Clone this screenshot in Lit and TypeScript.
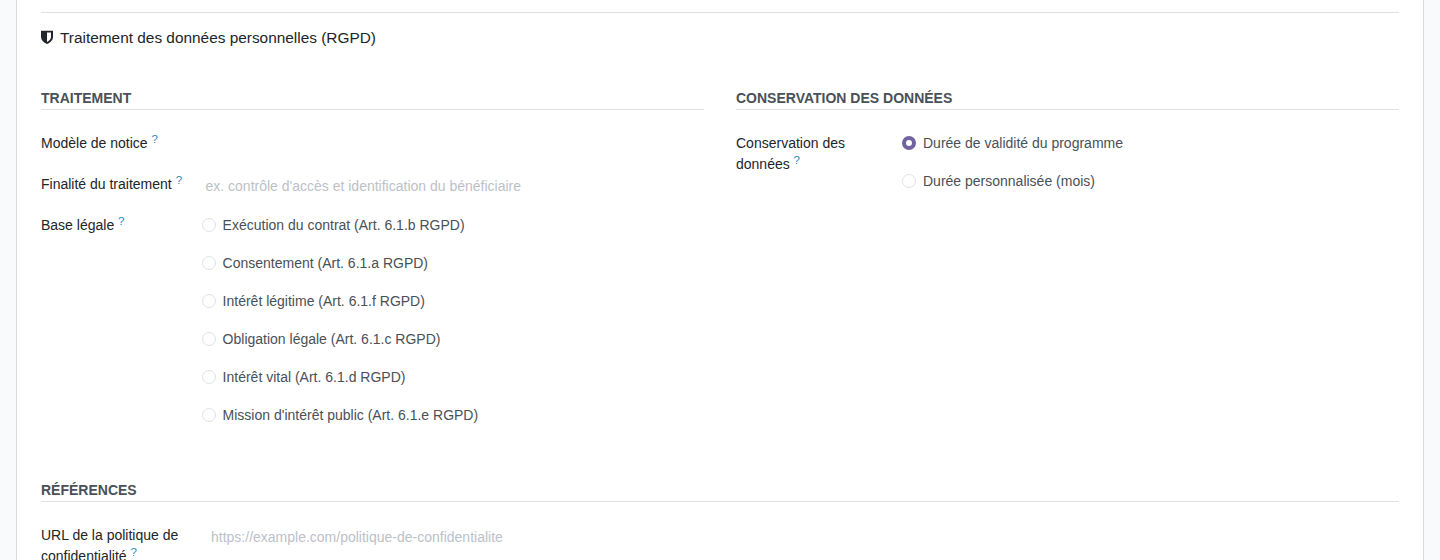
import { LitElement, html, css } from "lit";
import { customElement } from "lit/decorators.js";

const legal = [
  "Exécution du contrat (Art. 6.1.b RGPD)",
  "Consentement (Art. 6.1.a RGPD)",
  "Intérêt légitime (Art. 6.1.f RGPD)",
  "Obligation légale (Art. 6.1.c RGPD)",
  "Intérêt vital (Art. 6.1.d RGPD)",
  "Mission d'intérêt public (Art. 6.1.e RGPD)",
];

@customElement("app-root")
export class AppRoot extends LitElement {
  static styles = css`
    :host {
      display: block;
      height: 560px;
      overflow: hidden;
      background: #f9fafb;
      font-family: "Liberation Sans", Arial, sans-serif;
      font-size: 14px;
      line-height: 21px;
      color: #212529;
    }
    .sheet {
      box-sizing: border-box;
      margin: 0 16px;
      height: 560px;
      background: #fff;
      border-left: 1px solid #d8dadd;
      border-right: 1px solid #d8dadd;
      padding: 12px 24px 0;
    }
    .rule { height: 1px; background: #dee2e6; }
    .title {
      display: flex;
      align-items: center;
      gap: 7px;
      margin-top: 14px;
      height: 21px;
      font-size: 15.4px;
      color: #212529;
    }
    .title svg { display: block; width: 12px; height: 14px; position: relative; top: -1px; }
    .cols {
      display: grid;
      grid-template-columns: 1fr 1fr;
      column-gap: 32px;
      margin-top: 40px;
    }
    .head {
      font-weight: 700;
      font-size: 14px;
      line-height: 21px;
      color: #495057;
      text-transform: uppercase;
      border-bottom: 1px solid #dee2e6;
      height: 21px;
    }
    .form-left { display: grid; grid-template-columns: 161px 1fr; margin-top: 23px; }
    .form-right { display: grid; grid-template-columns: 166px 1fr; margin-top: 23px; }
    .form-right .radio { gap: 7px; }
    .label { color: #212529; padding-right: 8px; }
    .row-gap { margin-bottom: 20px; }
    sup {
      font-size: 11.500px;
      line-height: 0;
      color: #1c8cba;
      vertical-align: baseline;
      position: relative;
      top: -5px;
    }
    .placeholder { color: #bcc1c8; padding-left: 3.500px; position: relative; top: 2px; }
    .radios { display: flex; flex-direction: column; gap: 17px; }
    .radio { display: flex; align-items: center; gap: 6.600px; color: #495057; height: 21px; }
    .dot {
      box-sizing: border-box;
      width: 14px;
      height: 14px;
      border-radius: 50%;
      border: 1px solid #dee2e6;
      background: #fff;
      flex: none;
      position: relative;
      top: -1px;
    }
    .dot.on { border: 4px solid #71639e; }
    .refs { margin-top: 54px; }
    .form-refs { display: grid; grid-template-columns: 170px 1fr; margin-top: 23px; }
    .form-refs .placeholder { padding-left: 0; }
  `;

  render() {
    return html`
      <div class="sheet">
        <div class="rule"></div>
        <div class="title">
          <svg viewBox="0 0 12 14" aria-hidden="true">
            <path fill-rule="evenodd" fill="#212529" d="M0 .8 H12 V7 C12 10 9.500 12.500 6 14 C2.500 12.500 0 10 0 7 Z M6 2.500 V11.900 C8.300 10.800 10 9.200 10 7 V2.500 Z"/>
          </svg>
          <span>Traitement des données personnelles (RGPD)</span>
        </div>
        <div class="cols">
          <div>
            <div class="head">Traitement</div>
            <div class="form-left">
              <div class="label row-gap">Modèle de notice <sup>?</sup></div>
              <div class="row-gap"></div>
              <div class="label row-gap">Finalité du traitement <sup>?</sup></div>
              <div class="placeholder row-gap">ex. contrôle d'accès et identification du bénéficiaire</div>
              <div class="label">Base légale <sup>?</sup></div>
              <div class="radios">
                ${legal.map((t) => html`<div class="radio"><span class="dot"></span>${t}</div>`)}
              </div>
            </div>
          </div>
          <div>
            <div class="head">Conservation des données</div>
            <div class="form-right">
              <div class="label">Conservation des données <sup>?</sup></div>
              <div class="radios">
                <div class="radio"><span class="dot on"></span>Durée de validité du programme</div>
                <div class="radio"><span class="dot"></span>Durée personnalisée (mois)</div>
              </div>
            </div>
          </div>
        </div>
        <div class="refs">
          <div class="head">Références</div>
          <div class="form-refs">
            <div class="label">URL de la politique de confidentialité <sup>?</sup></div>
            <div class="placeholder">https://example.com/politique-de-confidentialite</div>
          </div>
        </div>
      </div>
    `;
  }
}
